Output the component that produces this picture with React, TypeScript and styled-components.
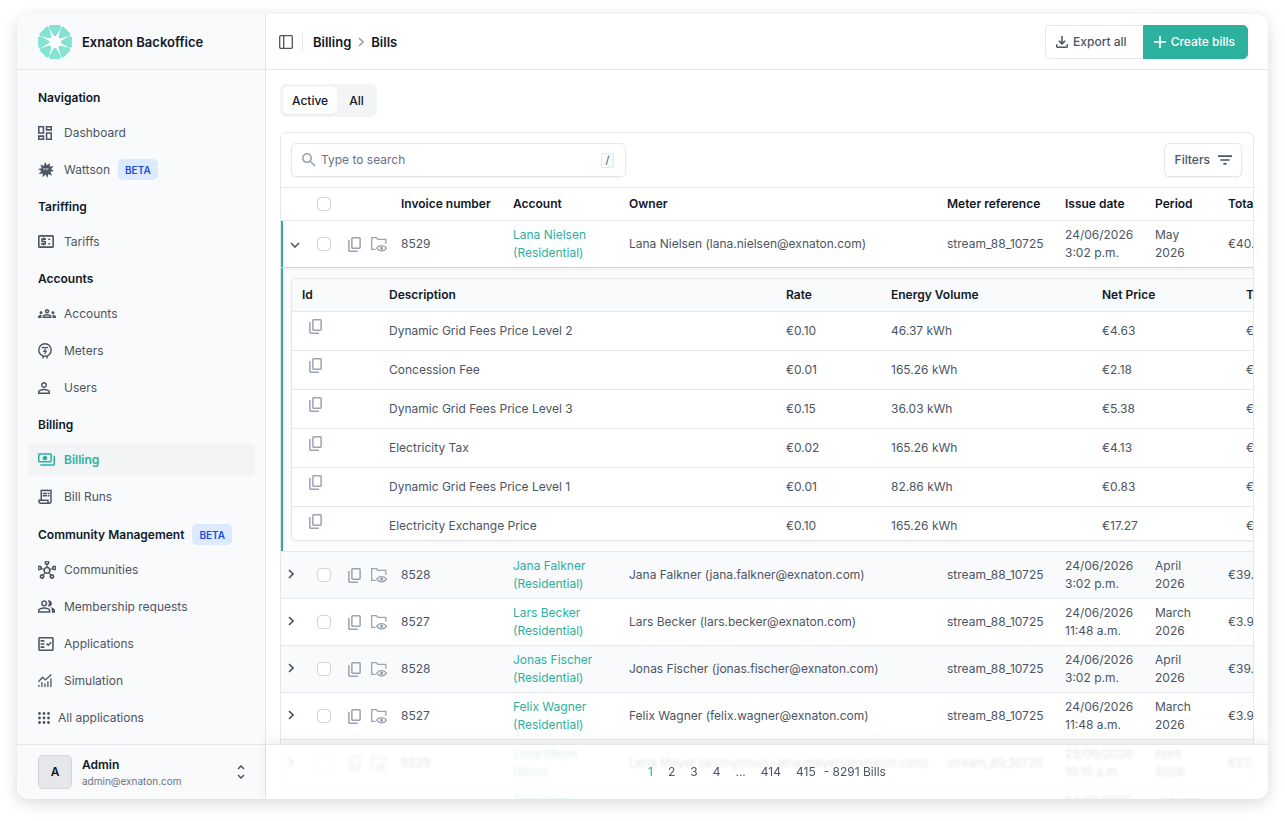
import React, { useState } from "react";
import styled, { createGlobalStyle, css } from "styled-components";
import {
  MdAdd,
  MdFilterList,
  MdOutlineDashboard,
  MdOutlineFactCheck,
  MdOutlineGroups,
  MdOutlineHub,
  MdOutlinePayments,
  MdOutlinePeopleAlt,
  MdOutlinePriceChange,
  MdOutlineReceiptLong,
  MdPersonOutline,
  MdSearch,
} from "react-icons/md";

const color = {
  ink: "#111827",
  text: "#4b5563",
  muted: "#6b7280",
  faint: "#9ca3af",
  line: "#e5e7eb",
  soft: "#f3f4f6",
  panel: "#f9fafb",
  teal: "#2cb19e",
  mint: "#85e2d2",
};

const GlobalStyle = createGlobalStyle`
  *, *::before, *::after { box-sizing: border-box; }
  body {
    margin: 0;
    background: #fff;
    color: ${color.text};
    font: 400 12px/18px Inter, "Liberation Sans", sans-serif;
  }
  button, input { font: inherit; color: inherit; }
  a { color: inherit; text-decoration: none; }
  ul { list-style: none; margin: 0; padding: 0; }
`;

/* ---------- icons ---------- */

const Glyph = styled.span<{ $w: number; $h: number; $color?: string }>`
  display: inline-flex;
  flex: none;
  color: ${(p) => p.$color ?? "inherit"};
  svg {
    display: block;
    width: ${(p) => p.$w}px;
    height: ${(p) => p.$h}px;
  }
`;

const WattsonIcon = () => (
  <svg viewBox="0 0 16 16" fill="currentColor" aria-hidden="true">
    <path d="M7.2 0l1.6 3.2L12 1.2l-.3 3.4L15.800 4.200 13 7l2.900 1.900-3.400.8 1.600 4-3.600-1.700L9.400 15.900 7.700 12.500 4.400 15.300l.4-3.800L.7 12l2.700-2.900L0 7l3.800-.8L2.400 2.400l3.500 1.500z" />
    <path d="M5.400 6h2v2.200h-2zM8.300 6h2v2.200h-2z" fill="#b6bcc6" />
    <path d="M6.200 6.800h.8v.8h-.8zM9 6.800h.8v.8H9z" />
  </svg>
);

const MeterIcon = () => (
  <svg viewBox="0 0 14 16" fill="none" stroke="currentColor" strokeWidth="1.400" aria-hidden="true">
    <circle cx="7" cy="7" r="6.200" />
    <path d="M3.800 4.600h6.400" />
    <path d="M7.600 5.800L5.900 8.300h2.300L6.500 11" strokeWidth="1.200" />
    <path d="M5 13v2.600M9 13v2.600" />
  </svg>
);

const SimulationIcon = () => (
  <svg viewBox="0 0 14 13" fill="none" stroke="currentColor" strokeWidth="1.300" aria-hidden="true">
    <path d="M.5 7.800l4-4.600 3 2.700L13.300.6" />
    <path d="M.9 13v-2M3.900 13V8M6.900 13V9.300M9.900 13V7.300M12.900 13V4.300" />
  </svg>
);

const AppsIcon = () => (
  <svg viewBox="0 0 12 12" fill="currentColor" aria-hidden="true">
    {[1.5, 6, 10.5].map((y) => [1.5, 6, 10.5].map((x) => <circle key={`${x}-${y}`} cx={x} cy={y} r="1.400" />))}
  </svg>
);

const LogoIcon = () => (
  <svg viewBox="-17 -17 34 34" fill={color.mint} stroke={color.mint} strokeWidth="2" strokeLinejoin="round" aria-hidden="true">
    <circle r="12" fill="#fff" stroke="none" />
    {[0, 45, 90, 135, 180, 225, 270, 315].map((a) => (
      <path key={a} d="M-4.600 -15.900H4.600L4.900 -14.600L.6 -7H-.6L-4.900 -14.600Z" transform={`rotate(${a})`} />
    ))}
  </svg>
);

const PanelIcon = () => (
  <svg viewBox="0 0 14 14" fill="none" stroke="currentColor" strokeWidth="1.300" aria-hidden="true">
    <rect x=".7" y=".7" width="12.600" height="12.600" rx="1" />
    <path d="M4.700 .7v12.600" />
  </svg>
);

const DownloadIcon = () => (
  <svg viewBox="4 4 16 16" fill="currentColor" aria-hidden="true">
    <path d="M12 16l-5-5 1.400-1.450 2.600 2.600V4h2v8.150l2.600-2.600L17 11l-5 5Zm-6 4q-.825 0-1.413-.588T4 18v-3h2v3h12v-3h2v3q0 .825-.588 1.413T18 20H6Z" />
  </svg>
);

const CopyIcon = () => (
  <svg viewBox="3 2 17 20" fill="currentColor" aria-hidden="true">
    <path d="M9 18q-.825 0-1.413-.588T7 16V4q0-.825.588-1.413T9 2h9q.825 0 1.413.588T20 4v12q0 .825-.588 1.413T18 18H9Zm0-2h9V4H9v12Zm-4 6q-.825 0-1.413-.588T3 20V6h2v14h11v2H5Z" />
  </svg>
);

const FolderEyeIcon = () => (
  <svg viewBox="0 0 16 15" fill="none" stroke="currentColor" strokeWidth="1.300" aria-hidden="true">
    <path d="M4.500 12.300H.7V.7h4.600l1.600 1.700h7.900v4.400" />
    <path d="M5.800 11.200c1-1.700 2.700-2.600 4.800-2.600s3.800.9 4.800 2.600c-1 1.700-2.700 2.600-4.800 2.600s-3.800-.9-4.800-2.600z" />
    <circle cx="10.600" cy="11.200" r="1" fill="currentColor" />
  </svg>
);

const ChevronIcon = () => (
  <svg viewBox="0 0 6 10" fill="none" stroke="currentColor" strokeWidth="1.600" aria-hidden="true">
    <path d="M1 1l4 4-4 4" />
  </svg>
);

const ChevronDownIcon = () => (
  <svg viewBox="0 0 10 6" fill="none" stroke="currentColor" strokeWidth="1.600" aria-hidden="true">
    <path d="M1 1l4 4 4-4" />
  </svg>
);

const SelectorIcon = () => (
  <svg viewBox="0 0 8 14" fill="none" stroke="currentColor" strokeWidth="1.500" aria-hidden="true">
    <path d="M1 4l3-3 3 3M1 10l3 3 3-3" />
  </svg>
);

/* ---------- frame ---------- */

const Page = styled.div`
  height: 100vh;
  padding: 14px 17px 22px;
`;

const Window = styled.div`
  display: flex;
  height: 100%;
  border-radius: 12px;
  overflow: hidden;
  background: #fff;
  box-shadow: 0 4px 16px rgba(0, 0, 0, 0.15);
`;

/* ---------- sidebar ---------- */

const Sidebar = styled.aside`
  flex: none;
  width: 249px;
  display: flex;
  flex-direction: column;
  background: ${color.panel};
  border-right: 1px solid ${color.line};
`;

const Brand = styled.div`
  display: flex;
  align-items: center;
  gap: 10px;
  height: 56px;
  padding-left: 21px;
  border-bottom: 1px solid ${color.line};
  color: ${color.ink};
  font-size: 13px;
  font-weight: 600;
`;

const Nav = styled.nav`
  flex: 1;
  min-height: 0;
  overflow: hidden;
  display: flex;
  flex-direction: column;
  gap: 11px;
  padding: 18px 10px 0 11px;
`;

const Group = styled.section`
  display: flex;
  flex-direction: column;
  gap: 8px;
`;

const GroupTitle = styled.h2`
  display: flex;
  align-items: center;
  gap: 8px;
  margin: 0;
  padding-left: 10px;
  min-height: 20px;
  color: ${color.ink};
  font-size: 12px;
  font-weight: 600;
`;

const NavList = styled.ul`
  display: flex;
  flex-direction: column;
  gap: 4px;
`;

const NavLink = styled.a<{ $active?: boolean }>`
  display: flex;
  align-items: center;
  gap: 8px;
  height: 33px;
  padding-left: 10px;
  border-radius: 4px;
  ${(p) =>
    p.$active &&
    css`
      background: ${color.soft};
      color: ${color.teal};
      font-weight: 600;
    `}
`;

const IconSlot = styled.span`
  display: flex;
  width: 18px;
`;

const Badge = styled.span`
  display: inline-flex;
  align-items: center;
  height: 21px;
  padding: 0 7px;
  border-radius: 5px;
  background: #dbeafe;
  color: #1d4ed8;
  font-size: 10px;
  font-weight: 600;
`;

const Account = styled.button`
  display: flex;
  align-items: center;
  gap: 10px;
  height: 55px;
  padding: 0 20px 0 21px;
  border: 0;
  border-top: 1px solid ${color.line};
  background: none;
  text-align: left;
`;

const Avatar = styled.span`
  display: grid;
  place-items: center;
  width: 34px;
  height: 34px;
  border: 1px solid #d1d5db;
  border-radius: 5px;
  background: ${color.line};
  color: ${color.ink};
  font-size: 12px;
  font-weight: 600;
`;

const AccountText = styled.span`
  flex: 1;
  display: flex;
  flex-direction: column;
  padding-top: 2px;
  line-height: 16px;
  font-size: 10px;
  color: ${color.muted};
  strong {
    color: ${color.ink};
    font-size: 12px;
    font-weight: 600;
  }
`;

/* ---------- main ---------- */

const Main = styled.main`
  position: relative;
  flex: 1;
  min-width: 0;
  display: flex;
  flex-direction: column;
`;

const TopBar = styled.header`
  flex: none;
  display: flex;
  align-items: center;
  height: 56px;
  padding: 0 20px 0 13px;
  border-bottom: 1px solid ${color.line};
`;

const PlainButton = styled.button`
  display: inline-flex;
  align-items: center;
  padding: 0;
  border: 0;
  background: none;
`;

const Crumbs = styled.nav`
  flex: 1;
  display: flex;
  align-items: center;
  gap: 7px;
  margin-left: 9px;
  padding-left: 10px;
  border-left: 1px solid ${color.line};
  color: ${color.ink};
  font-size: 13px;
  font-weight: 600;
`;

const ActionButton = styled.button<{ $primary?: boolean }>`
  display: inline-flex;
  align-items: center;
  gap: 5px;
  height: 34px;
  padding: 0 ${(p) => (p.$primary ? 12 : 16)}px 0 10px;
  border: 1px solid ${(p) => (p.$primary ? color.teal : color.line)};
  border-radius: ${(p) => (p.$primary ? "0 5px 5px 0" : "5px 0 0 5px")};
  border-right-width: ${(p) => (p.$primary ? 1 : 0)}px;
  background: ${(p) => (p.$primary ? color.teal : "#fff")};
  color: ${(p) => (p.$primary ? "#fff" : color.text)};
  font-weight: 500;
`;

const Content = styled.div`
  flex: 1;
  min-height: 0;
  overflow: hidden;
  display: flex;
  flex-direction: column;
  align-items: flex-start;
  gap: 15px;
  padding: 14px 14px 0;
`;

const Tabs = styled.div`
  flex: none;
  display: flex;
  padding: 3px;
  border-radius: 6px;
  background: ${color.soft};
`;

const Tab = styled.button<{ $selected: boolean }>`
  height: 27px;
  padding: 0 9px;
  border: 0;
  border-radius: 5px;
  background: ${(p) => (p.$selected ? "#fff" : "transparent")};
  box-shadow: ${(p) => (p.$selected ? "0 1px 2px rgba(0, 0, 0, 0.06)" : "none")};
  color: ${color.ink};
  font-weight: 500;
  & + & {
    padding: 0 10px 0 12px;
  }
`;

const Card = styled.section`
  flex: none;
  width: 100%;
  border: 1px solid ${color.line};
  border-radius: 6px;
  overflow: hidden;
`;

const Toolbar = styled.div`
  display: flex;
  justify-content: space-between;
  padding: 10px 11px 10px 10px;
  border-bottom: 1px solid ${color.line};
`;

const SearchBox = styled.label`
  display: flex;
  align-items: center;
  gap: 5px;
  width: 335px;
  height: 34px;
  padding: 0 11px 0 10px;
  border: 1px solid ${color.line};
  border-radius: 5px;
  box-shadow: 0 1px 2px rgba(0, 0, 0, 0.05);
`;

const SearchInput = styled.input`
  flex: 1;
  min-width: 0;
  padding: 0;
  border: 0;
  outline: 0;
  background: none;
  &::placeholder {
    color: ${color.muted};
    opacity: 1;
  }
`;

const Key = styled.kbd`
  display: grid;
  place-items: center;
  width: 13px;
  height: 15px;
  border: 1px solid ${color.line};
  border-radius: 2px;
  background: ${color.panel};
  font: 400 11px/13px Inter, sans-serif;
`;

const FilterButton = styled.button`
  display: inline-flex;
  align-items: center;
  gap: 8px;
  height: 34px;
  padding: 0 9px 0 10px;
  border: 1px solid ${color.line};
  border-radius: 5px;
  background: #fff;
  box-shadow: 0 1px 2px rgba(0, 0, 0, 0.05);
  font-weight: 500;
`;

/* ---------- tables ---------- */

const Scroller = styled.div`
  overflow-x: auto;
  scrollbar-width: none;
`;

const Table = styled.table`
  width: 100%;
  min-width: 1080px;
  table-layout: fixed;
  border-collapse: separate;
  border-spacing: 0;
  text-align: left;
`;

const HeadCell = styled.th`
  height: 33px;
  padding: 0;
  border-bottom: 1px solid ${color.line};
  color: ${color.ink};
  font-weight: 600;
  white-space: nowrap;
`;

const BillRow = styled.tr<{ $striped?: boolean; $open?: boolean }>`
  background: ${(p) => (p.$striped ? color.panel : "#fff")};
  td:first-child {
    box-shadow: ${(p) => (p.$open ? `inset 2px 0 ${color.teal}` : "none")};
    padding-left: ${(p) => (p.$open ? 9 : 7)}px;
  }
  td {
    border-bottom-color: ${(p) => (p.$open ? "#d1d5db" : color.line)};
  }
`;

const Cell = styled.td`
  height: 47px;
  padding: 0;
  border-bottom: 1px solid ${color.line};
  white-space: nowrap;
`;

const Line = styled.span`
  display: block;
`;

const AccountLink = styled.a`
  color: ${color.teal};
`;

const Check = styled.input`
  appearance: none;
  display: block;
  width: 14px;
  height: 14px;
  margin: 0;
  border: 1px solid #d1d5db;
  border-radius: 4px;
  background: #fff;
  &:checked {
    border-color: ${color.teal};
    background: ${color.teal};
  }
`;

const RowActions = styled.div`
  display: flex;
  align-items: center;
  gap: 10px;
  padding-left: 1px;
`;

const DetailCell = styled.td`
  padding: 10px 0 10px 10px;
  border-bottom: 1px solid ${color.line};
  background: #fcfcfc;
  box-shadow: inset 2px 0 ${color.teal}, inset 0 4px 4px -2px rgba(0, 0, 0, 0.05);
`;

const DetailBox = styled.div`
  height: 263px;
  overflow: hidden;
  border: 1px solid ${color.line};
  border-radius: 5px;
  background: #fff;
  box-shadow: 0 1px 2px rgba(0, 0, 0, 0.05);
`;

const DetailTable = styled(Table)`
  min-width: 0;
  ${HeadCell} {
    background: ${color.panel};
  }
  th:first-child {
    padding-left: 10px;
  }
`;

const DetailItem = styled.td`
  height: 39px;
  padding: 0;
  border-bottom: 1px solid ${color.line};
`;

const CopyItem = styled(DetailItem)`
  padding: 0 0 4px 17px;
`;

/* ---------- pagination ---------- */

const Pagination = styled.nav`
  position: absolute;
  inset: auto 0 0 0;
  display: flex;
  align-items: center;
  justify-content: center;
  gap: 1px;
  height: 55px;
  padding-right: 7px;
  border-top: 1px solid ${color.line};
  background: rgba(255, 255, 255, 0.86);
  backdrop-filter: blur(1px);
  box-shadow: 0 -3px 10px rgba(17, 24, 39, 0.08);
`;

const PageButton = styled.button<{ $current?: boolean }>`
  padding: 0 7px;
  border: 0;
  background: none;
  color: ${(p) => (p.$current ? color.teal : color.text)};
`;

/* ---------- data ---------- */

type NavEntry = { label: string; icon: React.ReactNode; w: number; h: number; beta?: boolean; active?: boolean };

const groups: { title: string; beta?: boolean; items: NavEntry[] }[] = [
  {
    title: "Navigation",
    items: [
      { label: "Dashboard", icon: <MdOutlineDashboard viewBox="3 3 18 18" />, w: 14, h: 14 },
      { label: "Wattson", icon: <WattsonIcon />, w: 16, h: 16, beta: true },
    ],
  },
  {
    title: "Tariffing",
    items: [{ label: "Tariffs", icon: <MdOutlinePriceChange viewBox="2 4 20 16" />, w: 16, h: 13 }],
  },
  {
    title: "Accounts",
    items: [
      { label: "Accounts", icon: <MdOutlineGroups viewBox="0 6 24 12" />, w: 18, h: 9 },
      { label: "Meters", icon: <MeterIcon />, w: 14, h: 16 },
      { label: "Users", icon: <MdPersonOutline viewBox="4 4 16 16" />, w: 12, h: 12 },
    ],
  },
  {
    title: "Billing",
    items: [
      { label: "Billing", icon: <MdOutlinePayments viewBox="1 4 22 16" />, w: 17, h: 13, active: true },
      { label: "Bill Runs", icon: <MdOutlineReceiptLong viewBox="3 2 18 20" />, w: 14, h: 15 },
    ],
  },
  {
    title: "Community Management",
    beta: true,
    items: [
      { label: "Communities", icon: <MdOutlineHub viewBox="1 1 22 22" />, w: 18, h: 18 },
      { label: "Membership requests", icon: <MdOutlinePeopleAlt viewBox="1 4 22 16" />, w: 17, h: 13 },
      { label: "Applications", icon: <MdOutlineFactCheck viewBox="2 3 20 18" />, w: 16, h: 14 },
      { label: "Simulation", icon: <SimulationIcon />, w: 14, h: 13 },
    ],
  },
];

const residential = "(Residential)";

const bills = [
  { no: "8529", name: "Lana Nielsen", kind: residential, mail: "lana.nielsen@exnaton.com", meter: "stream_88_10725", date: "24/06/2026", time: "3:02 p.m.", month: "May", total: "€40.12" },
  { no: "8528", name: "Jana Falkner", kind: residential, mail: "jana.falkner@exnaton.com", meter: "stream_88_10725", date: "24/06/2026", time: "3:02 p.m.", month: "April", total: "€39.48" },
  { no: "8527", name: "Lars Becker", kind: residential, mail: "lars.becker@exnaton.com", meter: "stream_88_10725", date: "24/06/2026", time: "11:48 a.m.", month: "March", total: "€3.91" },
  { no: "8528", name: "Jonas Fischer", kind: residential, mail: "jonas.fischer@exnaton.com", meter: "stream_88_10725", date: "24/06/2026", time: "3:02 p.m.", month: "April", total: "€39.48" },
  { no: "8527", name: "Felix Wagner", kind: residential, mail: "felix.wagner@exnaton.com", meter: "stream_88_10725", date: "24/06/2026", time: "11:48 a.m.", month: "March", total: "€3.91" },
  { no: "8529", name: "Lena Meyer", kind: "(Büro)", mail: "anonymous+lena.meyer@exnaton.com", meter: "stream_89_10726", date: "25/06/2026", time: "10:15 a.m.", month: "April", total: "€27.30" },
  { no: "8526", name: "Timo Gatz", kind: residential, mail: "timo.gatz@exnaton.com", meter: "stream_88_10725", date: "24/06/2026", time: "11:48 a.m.", month: "January", total: "€31.07" },
];

const positions = [
  ["Dynamic Grid Fees Price Level 2", "€0.10", "46.37 kWh", "€4.63"],
  ["Concession Fee", "€0.01", "165.26 kWh", "€2.18"],
  ["Dynamic Grid Fees Price Level 3", "€0.15", "36.03 kWh", "€5.38"],
  ["Electricity Tax", "€0.02", "165.26 kWh", "€4.13"],
  ["Dynamic Grid Fees Price Level 1", "€0.01", "82.86 kWh", "€0.83"],
  ["Electricity Exchange Price", "€0.10", "165.26 kWh", "€17.27"],
];

const billColumns = [36, 30, 54, 112, 116, undefined, 118, 90, 73, 133];
const detailColumns = [97, 397, 105, 211, 144, undefined];

const Columns = ({ widths }: { widths: (number | undefined)[] }) => (
  <colgroup>
    {widths.map((w, i) => (
      <col key={i} width={w} />
    ))}
  </colgroup>
);

const CopyButton = ({ label }: { label: string }) => (
  <PlainButton aria-label={label}>
    <Glyph $w={13} $h={15} $color={color.faint}>
      <CopyIcon />
    </Glyph>
  </PlainButton>
);

function BillDetails() {
  return (
    <DetailBox>
      <DetailTable>
        <Columns widths={detailColumns} />
        <thead>
          <tr>
            {["Id", "Description", "Rate", "Energy Volume", "Net Price", "Total"].map((h) => (
              <HeadCell key={h}>{h}</HeadCell>
            ))}
          </tr>
        </thead>
        <tbody>
          {positions.map(([name, rate, volume, net]) => (
            <tr key={name}>
              <CopyItem>
                <CopyButton label={`Copy id of ${name}`} />
              </CopyItem>
              <DetailItem>{name}</DetailItem>
              <DetailItem>{rate}</DetailItem>
              <DetailItem>{volume}</DetailItem>
              <DetailItem>{net}</DetailItem>
              <DetailItem>{net}</DetailItem>
            </tr>
          ))}
        </tbody>
      </DetailTable>
    </DetailBox>
  );
}

function BillsTable() {
  const [openRow, setOpenRow] = useState<number | null>(0);
  return (
    <Scroller>
      <Table>
        <Columns widths={billColumns} />
        <thead>
          <tr>
            <HeadCell />
            <HeadCell>
              <Check type="checkbox" aria-label="Select all bills" />
            </HeadCell>
            <HeadCell />
            {["Invoice number", "Account", "Owner", "Meter reference", "Issue date", "Period", "Total"].map((h) => (
              <HeadCell key={h}>{h}</HeadCell>
            ))}
          </tr>
        </thead>
        <tbody>
          {bills.map((b, i) => {
            const open = openRow === i;
            return (
              <React.Fragment key={i}>
                <BillRow $striped={i % 2 === 1} $open={open}>
                  <Cell>
                    <PlainButton aria-label={`Details of bill ${b.no}`} aria-expanded={open} onClick={() => setOpenRow(open ? null : i)}>
                      {open ? (
                        <Glyph $w={10} $h={6}>
                          <ChevronDownIcon />
                        </Glyph>
                      ) : (
                        <Glyph $w={6} $h={10}>
                          <ChevronIcon />
                        </Glyph>
                      )}
                    </PlainButton>
                  </Cell>
                  <Cell>
                    <Check type="checkbox" aria-label={`Select bill ${b.no} of ${b.name}`} />
                  </Cell>
                  <Cell>
                    <RowActions>
                      <CopyButton label={`Copy id of bill ${b.no}`} />
                      <PlainButton aria-label={`View bill ${b.no}`}>
                        <Glyph $w={16} $h={15} $color={color.faint}>
                          <FolderEyeIcon />
                        </Glyph>
                      </PlainButton>
                    </RowActions>
                  </Cell>
                  <Cell>{b.no}</Cell>
                  <Cell>
                    <AccountLink href="#account">
                      <Line>{b.name}</Line>
                      <Line>{b.kind}</Line>
                    </AccountLink>
                  </Cell>
                  <Cell>
                    {b.name} ({b.mail})
                  </Cell>
                  <Cell>{b.meter}</Cell>
                  <Cell>
                    <Line>{b.date}</Line>
                    <Line>{b.time}</Line>
                  </Cell>
                  <Cell>
                    <Line>{b.month}</Line>
                    <Line>2026</Line>
                  </Cell>
                  <Cell>{b.total}</Cell>
                </BillRow>
                {open && (
                  <tr>
                    <DetailCell colSpan={10}>
                      <BillDetails />
                    </DetailCell>
                  </tr>
                )}
              </React.Fragment>
            );
          })}
        </tbody>
      </Table>
    </Scroller>
  );
}

export default function App() {
  const [tab, setTab] = useState("Active");
  return (
    <>
      <GlobalStyle />
      <Page>
        <Window>
          <Sidebar>
            <Brand>
              <Glyph $w={34} $h={34}>
                <LogoIcon />
              </Glyph>
              Exnaton Backoffice
            </Brand>
            <Nav aria-label="Sidebar">
              {groups.map((g) => (
                <Group key={g.title}>
                  <GroupTitle>
                    {g.title}
                    {g.beta && <Badge>BETA</Badge>}
                  </GroupTitle>
                  <NavList>
                    {g.items.map((item) => (
                      <li key={item.label}>
                        <NavLink href="#page" $active={item.active}>
                          <IconSlot>
                            <Glyph $w={item.w} $h={item.h}>
                              {item.icon}
                            </Glyph>
                          </IconSlot>
                          {item.label}
                          {item.beta && <Badge>BETA</Badge>}
                        </NavLink>
                      </li>
                    ))}
                    {g.beta && (
                      <li>
                        <NavLink href="#all">
                          <Glyph $w={12} $h={12}>
                            <AppsIcon />
                          </Glyph>
                          All applications
                        </NavLink>
                      </li>
                    )}
                  </NavList>
                </Group>
              ))}
            </Nav>
            <Account>
              <Avatar>A</Avatar>
              <AccountText>
                <strong>Admin</strong>
                admin@exnaton.com
              </AccountText>
              <Glyph $w={8} $h={14}>
                <SelectorIcon />
              </Glyph>
            </Account>
          </Sidebar>
          <Main>
            <TopBar>
              <PlainButton aria-label="Toggle sidebar">
                <Glyph $w={14} $h={14}>
                  <PanelIcon />
                </Glyph>
              </PlainButton>
              <Crumbs aria-label="Breadcrumb">
                <a href="#billing">Billing</a>
                <Glyph $w={6} $h={10} $color={color.faint}>
                  <ChevronIcon />
                </Glyph>
                <a href="#bills">Bills</a>
              </Crumbs>
              <ActionButton>
                <Glyph $w={12} $h={12}>
                  <DownloadIcon />
                </Glyph>
                Export all
              </ActionButton>
              <ActionButton $primary>
                <Glyph $w={12} $h={12}>
                  <MdAdd viewBox="5 5 14 14" />
                </Glyph>
                Create bills
              </ActionButton>
            </TopBar>
            <Content>
              <Tabs role="tablist">
                {["Active", "All"].map((t) => (
                  <Tab key={t} role="tab" aria-selected={tab === t} $selected={tab === t} onClick={() => setTab(t)}>
                    {t}
                  </Tab>
                ))}
              </Tabs>
              <Card>
                <Toolbar>
                  <SearchBox>
                    <Glyph $w={14} $h={14} $color={color.faint}>
                      <MdSearch viewBox="3 3 18 18" />
                    </Glyph>
                    <SearchInput type="text" placeholder="Type to search" aria-label="Search bills" />
                    <Key>/</Key>
                  </SearchBox>
                  <FilterButton>
                    Filters
                    <Glyph $w={14} $h={10}>
                      <MdFilterList viewBox="3 6 18 12" />
                    </Glyph>
                  </FilterButton>
                </Toolbar>
                <BillsTable />
              </Card>
            </Content>
            <Pagination aria-label="Pages">
              <PageButton $current aria-current="page">
                1
              </PageButton>
              <PageButton>2</PageButton>
              <PageButton>3</PageButton>
              <PageButton>4</PageButton>
              <PageButton>...</PageButton>
              <PageButton>414</PageButton>
              <PageButton>415</PageButton>
              <span>- 8291 Bills</span>
            </Pagination>
          </Main>
        </Window>
      </Page>
    </>
  );
}
